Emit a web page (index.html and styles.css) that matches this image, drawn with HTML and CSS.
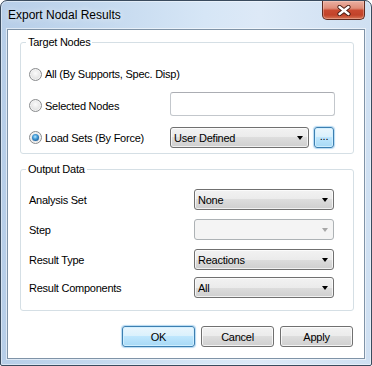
FILE: index.html
```html
<!DOCTYPE html>
<html>
<head>
<meta charset="utf-8">
<title>Export Nodal Results</title>
<link rel="stylesheet" href="styles.css">
</head>
<body>
<div class="window">
  <div class="titlebar">
    <span class="title">Export Nodal Results</span>
    <div class="close">
      <svg width="14" height="11" viewBox="0 0 14 11">
        <path d="M2.5 2 L11.5 9 M11.5 2 L2.5 9" stroke="#4a1d14" stroke-width="4.2" stroke-linecap="round"/>
        <path d="M2.5 2 L11.5 9 M11.5 2 L2.5 9" stroke="#ffffff" stroke-width="2.4" stroke-linecap="round"/>
      </svg>
    </div>
  </div>
  <div class="client">
    <div class="group group-target">
      <div class="legend">Target Nodes</div>
      <div class="rows target-rows">
        <div class="row t1">
          <div class="opt wide"><span class="radio"></span><span>All (By Supports, Spec. Disp)</span></div>
        </div>
        <div class="row t2">
          <div class="opt"><span class="radio"></span><span>Selected Nodes</span></div>
          <div class="textbox"></div>
        </div>
        <div class="row t3">
          <div class="opt"><span class="radio checked"><span class="dot"></span></span><span>Load Sets (By Force)</span></div>
          <div class="combo-line">
            <div class="combo combo-user"><span>User Defined</span><span class="arrow"></span></div>
            <div class="btn btn-default ellipsis">...</div>
          </div>
        </div>
      </div>
    </div>
    <div class="group group-output">
      <div class="legend">Output Data</div>
      <div class="rows output-rows">
        <div class="row o1"><span class="lbl">Analysis Set</span><div class="combo"><span>None</span><span class="arrow"></span></div></div>
        <div class="row o2"><span class="lbl">Step</span><div class="combo disabled"><span></span><span class="arrow"></span></div></div>
        <div class="row o3"><span class="lbl">Result Type</span><div class="combo"><span>Reactions</span><span class="arrow"></span></div></div>
        <div class="row o4"><span class="lbl">Result Components</span><div class="combo"><span>All</span><span class="arrow"></span></div></div>
      </div>
    </div>
    <div class="buttons">
      <div class="btn btn-default">OK</div>
      <div class="btn">Cancel</div>
      <div class="btn">Apply</div>
    </div>
  </div>
</div>
</body>
</html>
```

FILE: styles.css
```css
html, body {
  margin: 0;
  padding: 0;
  background: #ffffff;
}
body {
  font-family: "Liberation Sans", Arial, sans-serif;
  font-size: 11px;
  letter-spacing: -0.25px;
  color: #000;
  white-space: nowrap;
}
.window {
  width: 372px;
  height: 366px;
  box-sizing: border-box;
  border: 1px solid #3a4b5e;
  border-radius: 7px 7px 2px 2px;
  background: linear-gradient(to right, #b7cee8 0%, #c3d8ee 25%, #d6e6f6 55%, #dde9f7 70%, #cfe0f2 100%);
  box-shadow: inset 0 0 0 1px rgba(255,255,255,0.45);
  display: flex;
  flex-direction: column;
  overflow: hidden;
}
.titlebar {
  height: 28px;
  flex: none;
  display: flex;
  justify-content: space-between;
  align-items: flex-start;
  padding-left: 7px;
  padding-right: 6px;
}
.title {
  margin-top: 7px;
  font-size: 12px;
  line-height: 14px;
  letter-spacing: 0;
  color: #000;
  text-shadow: 0 0 6px rgba(255,255,255,0.9);
}
.close {
  width: 43px;
  height: 19px;
  box-sizing: border-box;
  border: 1px solid #5e2a20;
  border-top: none;
  border-radius: 0 0 5px 5px;
  background: linear-gradient(#eab0a2 0%, #df8d79 40%, #c94a31 52%, #c2432a 78%, #d67657 100%);
  box-shadow: inset 0 0 0 1px rgba(255,220,210,0.35);
  display: flex;
  align-items: center;
  justify-content: center;
}
.close svg { display: block; }
.client {
  flex: 1;
  margin: 0 6px 6px 6px;
  border: 1px solid #7f93a7;
  background: #ffffff;
  box-shadow: 0 0 0 1px rgba(255,255,255,0.55);
  padding: 0 10px 0 12px;
  display: flex;
  flex-direction: column;
}
.group {
  border: 1px solid #d5dfe5;
  border-radius: 3px;
}
.group-target { margin-top: 12px; }
.group-output { margin-top: 15px; }
.legend {
  width: max-content;
  margin: -7px 0 0 5px;
  padding: 0 2px;
  background: #ffffff;
  line-height: 13px;
}
.rows {
  display: flex;
  flex-direction: column;
}
.target-rows { padding: 14px 18px 5px 8px; }
.output-rows { padding: 13px 18px 12px 8px; }
.row {
  display: grid;
  align-items: center;
}
.target-rows .row { grid-template-columns: 141px 165px; }
.output-rows .row { grid-template-columns: 165px 140px; height: 21px; }
.t1 { height: 22px; }
.t2 { height: 24px; margin-top: 7px; }
.t2 .opt { padding-top: 3px; }
.t3 { height: 21px; margin-top: 11px; }
.o2, .o3 { margin-top: 9px; }
.o4 { margin-top: 7px; }
.opt {
  display: flex;
  align-items: center;
  gap: 3px;
}
.opt.wide { grid-column: 1 / -1; }
.radio {
  width: 13px;
  height: 13px;
  box-sizing: border-box;
  border-radius: 50%;
  border: 1px solid #8a8c8e;
  background: radial-gradient(circle at 50% 40%, #fbfbfb 0%, #e6e6e6 55%, #cfd0d1 100%);
  box-shadow: inset 0 0 0 1px #f4f4f4;
  display: flex;
  align-items: center;
  justify-content: center;
  flex: none;
}
.dot {
  width: 7px;
  height: 7px;
  border-radius: 50%;
  background: radial-gradient(circle at 45% 40%, #bfe6fb 0%, #4aa3dd 35%, #1c5f9c 75%, #0e3a66 100%);
}
.textbox {
  height: 24px;
  box-sizing: border-box;
  border: 1px solid #c3c7cc;
  border-top-color: #abadb3;
  border-radius: 3px;
  background: #ffffff;
}
.combo-line {
  display: flex;
  align-items: center;
  gap: 5px;
}
.combo {
  height: 21px;
  box-sizing: border-box;
  border: 1px solid #707070;
  border-radius: 3px;
  background: linear-gradient(#f2f2f2 0%, #ebebeb 50%, #dddddd 50%, #cfcfcf 100%);
  box-shadow: inset 0 0 0 1px rgba(255,255,255,0.7);
  display: flex;
  align-items: center;
  justify-content: space-between;
  padding: 0 5px 0 3px;
}
.combo-user { width: 139px; }
.arrow {
  width: 0;
  height: 0;
  border-left: 3.5px solid transparent;
  border-right: 3.5px solid transparent;
  border-top: 4px solid #000;
}
.combo.disabled {
  border-color: #adb2b5;
  background: #f4f4f4;
  box-shadow: none;
}
.combo.disabled .arrow { border-top-color: #a7a7a7; }
.btn {
  height: 21px;
  width: 73px;
  box-sizing: border-box;
  border: 1px solid #707070;
  border-radius: 3px;
  background: linear-gradient(#f2f2f2 0%, #ebebeb 50%, #dddddd 50%, #cfcfcf 100%);
  box-shadow: inset 0 0 0 1px rgba(255,255,255,0.75);
  display: flex;
  align-items: center;
  justify-content: center;
  color: #000;
}
.btn-default {
  border-color: #3c7fb1;
  background: linear-gradient(#eaf6fd 0%, #d9f0fc 50%, #bee6fd 50%, #a7d9f5 100%);
  box-shadow: inset 0 0 0 1px rgba(210,240,255,0.9), 0 0 1px 1px rgba(110,180,230,0.5);
}
.ellipsis {
  width: 20px;
  height: 21px;
  align-items: flex-end;
  padding-bottom: 5px;
  line-height: 11px;
}
.buttons {
  display: flex;
  justify-content: flex-end;
  gap: 6px;
  margin-top: 15px;
  padding-right: 1px;
}
```
